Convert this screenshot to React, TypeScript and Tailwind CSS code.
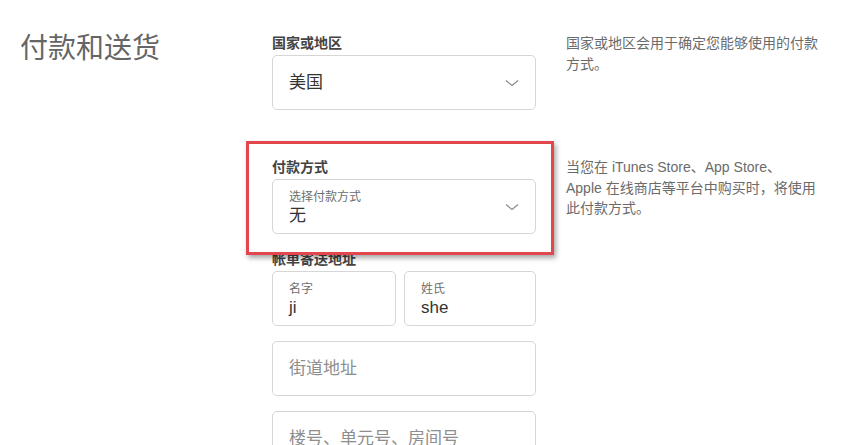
import { ReactNode } from "react";

const font = { fontFamily: '"Liberation Sans", "Noto Sans CJK SC", sans-serif' };

function Chevron() {
  return (
    <svg width="14" height="8" viewBox="0 0 14 8" className="shrink-0">
      <path d="M1 1.5 L7 6.5 L13 1.5" fill="none" stroke="#8a8a8a" strokeWidth="1.2" />
    </svg>
  );
}

function Field({
  label,
  value,
  placeholder,
  select,
}: {
  label?: string;
  value?: string;
  placeholder?: string;
  select?: boolean;
}) {
  return (
    <div className="h-[55px] border border-[#d6d6d6] rounded-[5px] bg-white flex items-center pl-[16px] pr-[16px]">
      <div className={`flex-1 min-w-0 ${label ? "pt-[3px]" : ""}`}>
        {label && <div className="text-[12px] leading-[15px] text-[#6e6e6e]">{label}</div>}
        {value && <div className="text-[17px] leading-[21px] text-[#333]">{value}</div>}
        {placeholder && <div className="text-[17px] leading-[20px] text-[#8e8e8e]">{placeholder}</div>}
      </div>
      {select && <Chevron />}
    </div>
  );
}

function Row({ children, note }: { children: ReactNode; note?: ReactNode }) {
  return (
    <div className="grid grid-cols-[272px_264px_1fr]">
      <div />
      <div>{children}</div>
      <div className="pl-[30px] pr-[15px] -mt-[1px] text-[14px] leading-[20.5px] text-[#6b6b6b]">{note}</div>
    </div>
  );
}

function Label({ children }: { children: ReactNode }) {
  return <div className="text-[14px] leading-[18px] font-bold text-[#444] mb-[3px]">{children}</div>;
}

export default function App() {
  return (
    <div style={font} className="relative w-[841px] h-[445px] overflow-hidden bg-white pt-[34px]">
      <div className="absolute left-[20px] top-[33px] text-[28px] leading-[32px] text-[#666]">付款和送货</div>

      <Row note={<>国家或地区会用于确定您能够使用的付款方式。</>}>
        <Label>国家或地区</Label>
        <Field value="美国" select />
      </Row>

      <div className="h-[48px]" />

      <Row
        note={
          <>
            当您在 iTunes Store、App Store、
            <br />
            Apple 在线商店等平台中购买时，将使用此付款方式。
          </>
        }
      >
        <Label>付款方式</Label>
        <Field label="选择付款方式" value="无" select />
      </Row>

      <div className="h-[16px]" />

      <Row>
        <Label>帐单寄送地址</Label>
        <div className="flex gap-[8px]">
          <div className="w-[124px]">
            <Field label="名字" value="ji" />
          </div>
          <div className="flex-1">
            <Field label="姓氏" value="she" />
          </div>
        </div>
        <div className="mt-[15px]">
          <Field placeholder="街道地址" />
        </div>
        <div className="mt-[15px]">
          <Field placeholder="楼号、单元号、房间号" />
        </div>
      </Row>

      <div className="absolute left-[246px] top-[141px] w-[308px] h-[114px] border-[3px] border-[#e2474d] shadow-[2px_3px_5px_rgba(0,0,0,0.35)]" />
    </div>
  );
}
